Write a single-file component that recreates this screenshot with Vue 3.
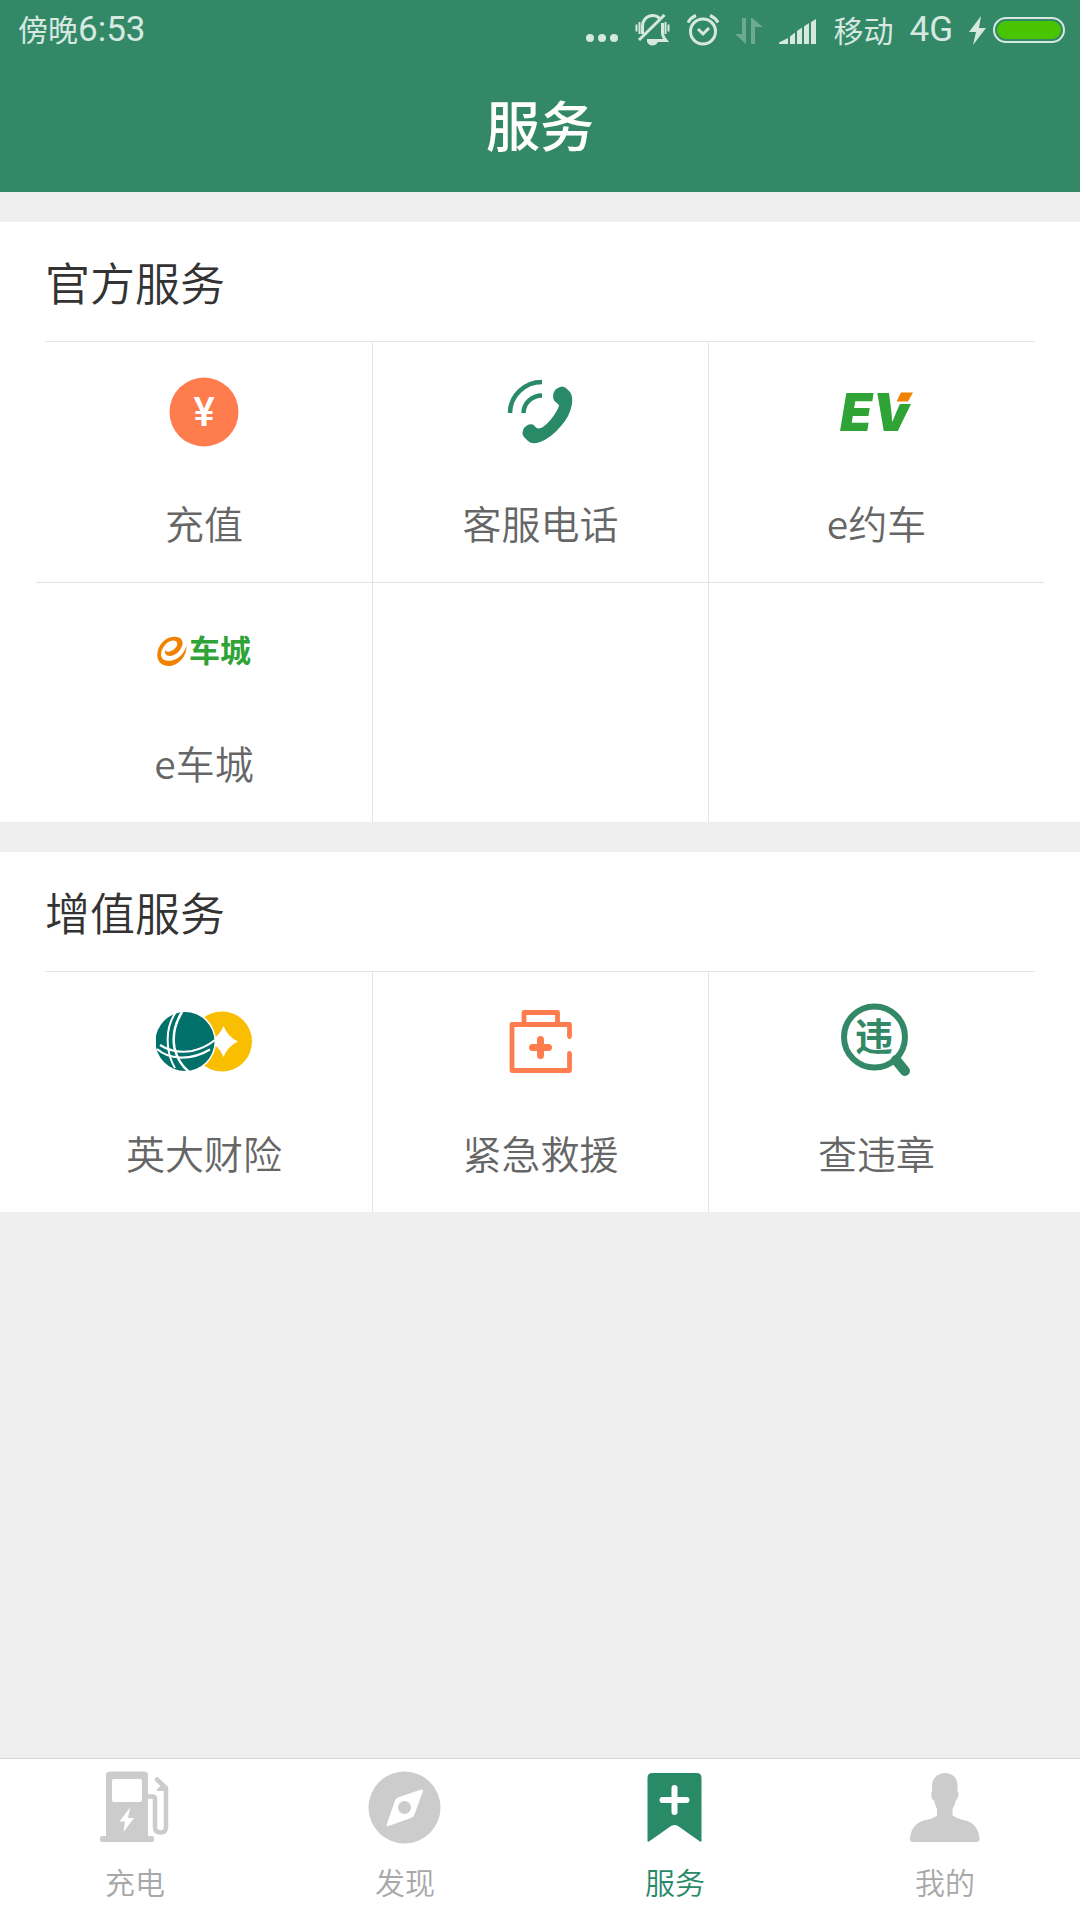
<template>
  <div class="service-page">
    <header class="page-head">
      <div class="status-bar">
        <div class="status-time">傍晚<span class="status-latin">6:53</span></div>
        <div class="status-icons">
          <svg width="34" height="32" viewBox="0 0 34 32" aria-hidden="true">
            <circle cx="5" cy="24" r="4" />
            <circle cx="17" cy="24" r="4" />
            <circle cx="29" cy="24" r="4" />
          </svg>
          <svg width="36" height="32" viewBox="0 0 36 32" aria-hidden="true">
            <g class="line">
              <path d="M7.5 20V12.5C7.5 6 12 1.5 17.5 1.5C20.5 1.5 23 2.5 24.5 4.5" />
              <path d="M27.5 9V19C27.5 22 29 24 31 26.5H12" />
              <path d="M29.5 1L4 26" />
              <path d="M1.5 10.500V17.500M4.500 8V20M30.500 8V20M33.500 10.500V17.500" stroke-width="2" />
            </g>
            <path d="M12 28H23Q21 31.500 17.500 31.500T12 28Z" />
          </svg>
          <svg width="32" height="32" viewBox="0 0 32 32" aria-hidden="true">
            <g class="line">
              <circle cx="16" cy="17.500" r="12.500" />
              <path d="M11 15L16 20L22 14" />
              <path d="M1 8.500Q4 3.500 9 1.500M31 8.500Q28 3.500 23 1.500" />
            </g>
          </svg>
          <svg class="dim" width="28" height="32" viewBox="0 0 28 32" aria-hidden="true">
            <path d="M7 4H11V30L0 20H7Z" />
            <path d="M16 30H20V13H28L17 4H16Z" />
          </svg>
          <svg width="38" height="32" viewBox="0 0 38 32" aria-hidden="true">
            <path d="M0 30V28.500L9 24V30ZM11 30V22.500L16 18.500V30ZM18 30V17L23 13.500V30ZM25 30V12.500L30 9V30ZM32 30V8L37 5V30Z" />
          </svg>
          <span class="status-carrier">移动</span>
          <span class="status-latin">4G</span>
          <span class="status-power">
            <svg width="18" height="32" viewBox="0 0 18 32" aria-hidden="true">
              <path d="M12 2L0 18H7L4 31L17 14H10Z" />
            </svg>
            <span class="battery"></span>
          </span>
        </div>
      </div>
      <h1>服务</h1>
    </header>

    <main>
      <section v-for="group in groups" :key="group.title" class="service-group">
        <h2>{{ group.title }}</h2>
        <div class="service-grid">
          <template v-for="(item, index) in group.items" :key="index">
            <button v-if="item" type="button" class="service-cell">
              <svg width="96" height="96" viewBox="0 0 96 96" aria-hidden="true">
                <g v-if="item.icon === 'recharge'">
                  <circle cx="48" cy="48" r="34.500" fill="#ff7c4e" />
                  <text class="yen" x="48" y="62" text-anchor="middle">¥</text>
                </g>
                <g v-else-if="item.icon === 'phone'">
                  <path d="M17 49A32 31 0 0 1 49 18M30.500 49A18.500 17.500 0 0 1 49 31.500" fill="none" stroke="#288a67" stroke-width="4.500" />
                  <path d="M65 24Q69 21 73 24L77 28Q80 32 79 40Q77 52 68 62Q58 74 47 78Q39 81 35 77L31 73Q28 69 31 64Q35 59 40 60.500L43 63.500Q46 65.500 50 63Q58 57 63 48Q66 43 66 41L61 36.500Q59 32 61 28Q62 25 65 24Z" fill="#288a67" />
                </g>
                <g v-else-if="item.icon === 'ev'">
                  <text class="ev" x="11" y="67">EV</text>
                  <path d="M70 26H92V40H63Z" fill="#fff" />
                  <path d="M72 28.500H84L79 37.500H67.500Z" fill="#f08200" />
                </g>
                <g v-else-if="item.icon === 'mall'">
                  <path d="M30.500 42C31 52 22 62.500 12 62C4 61.500 1 56 1.300 50C2 41 9 33 18 32.700C24 32.500 27.500 36 26.500 40.500C25 47 19 52 14 52C10.500 52 8 49 9 46C10.500 48.500 13 48 16 46.500C20 44.500 22 41 21 38.500C19.500 35.500 14.500 36 11 39C6.500 43 4 49 5.500 53C7 57 13 58 19 55.500C25 53 29 47 30.500 42Z" fill="#f08200" />
                  <text class="mall" x="33" y="58">车城</text>
                </g>
                <g v-else-if="item.icon === 'insurance'">
                  <circle cx="66" cy="47.500" r="30" fill="#fabe00" />
                  <path d="M67.500 32Q72 43 82 47.500Q72 52 67.500 63Q63 52 53 47.500Q63 43 67.500 32Z" fill="#fff" />
                  <circle cx="29" cy="47.500" r="31" fill="#fff" />
                  <circle cx="29" cy="47.500" r="29.500" fill="#00706b" />
                  <g fill="none" stroke="#fff">
                    <path d="M20 18Q10 32 12 52Q13 64 19 74" stroke-width="2" />
                    <path d="M26 18Q15 36 18.500 54Q22 69 33 78" stroke-width="2.500" />
                    <path d="M1 55Q10 63 24 63.500Q40 64 54 55.500" stroke-width="2.200" />
                    <path d="M4 51Q18 60 36 57Q49 54 59 46" stroke-width="2.200" />
                  </g>
                </g>
                <g v-else-if="item.icon === 'rescue'">
                  <g fill="none" stroke="#ff7c4e" stroke-width="4.800" stroke-linecap="round" stroke-linejoin="round">
                    <path d="M76.500 42.500V30.500H19V76.500H76.500V59.500" />
                    <path d="M31 29V18.500H64.500V29" />
                  </g>
                  <path d="M47.500 45.500V61.500M39.500 53.500H55.500" stroke="#ff7c4e" stroke-width="7" stroke-linecap="round" />
                </g>
                <g v-else>
                  <circle cx="45.500" cy="43" r="30.500" fill="none" stroke="#338967" stroke-width="6" />
                  <path d="M67 66L76 77" stroke="#338967" stroke-width="10" stroke-linecap="round" />
                  <text class="violation" x="45" y="56" text-anchor="middle">违</text>
                </g>
              </svg>
              <span>{{ item.label }}</span>
            </button>
            <div v-else class="service-cell"></div>
          </template>
        </div>
      </section>
    </main>

    <nav class="tab-bar">
      <a v-for="tab in tabs" :key="tab.icon" href="#" :class="{ active: tab.icon === 'service' }">
        <svg width="80" height="80" viewBox="0 0 80 80" aria-hidden="true">
          <g v-if="tab.icon === 'charge'">
            <path d="M11 69V8Q11 4.500 15 4.500H49Q53 4.500 53 8V69H57Q59 69 59 71V73Q59 75 57 75H7Q5 75 5 73V71Q5 69 7 69Z" />
            <rect x="17" y="12" width="30" height="23" rx="2" fill="#fff" />
            <path d="M35 40.500L24.500 54.500H30L28.500 65L39 51H33Z" fill="#fff" />
            <path d="M53 29.500H57.500Q60 29.500 60 32V60Q60 65.500 65.500 65.500T71 60V21L62 12.500" fill="none" stroke="currentColor" stroke-width="4.500" stroke-linecap="round" />
            <path d="M64 15L72 20V24H61.500Q62 21 66 19Z" />
          </g>
          <g v-else-if="tab.icon === 'discover'">
            <circle cx="39.500" cy="40.500" r="36" />
            <path d="M56 22.500L33 30.500Q31 31 30 33.500L21.500 58Q21.500 60 23.500 59L46 51Q48.500 50 49.500 47.500L58 24Q58 22 56 22.500Z" fill="#fff" />
            <circle cx="39.500" cy="40.500" r="6.500" />
          </g>
          <g v-else-if="tab.icon === 'service'">
            <path d="M12.500 74V11Q12.500 6 17.500 6H61.500Q66.500 6 66.500 11V74Q66.500 75 65 74.500L43 59Q39.500 57 36 59L14 74.500Q12.500 75 12.500 74Z" />
            <path d="M39.500 21V45M27.500 33H51.500" stroke="#fff" stroke-width="6" stroke-linecap="round" />
          </g>
          <path v-else d="M40 6C48 6 53 12 52.500 19V24Q54 25 53 30Q52.500 33 51 33Q50 38 47.500 42V48.500Q52 51.500 58 53C70 55 74 63 74.500 72Q74.500 75 71.500 75H8Q5 75 5 72C5.500 63 10 55 21 53Q28 51.500 32 48.500V42Q30 38 29 33Q27 33 26.500 30Q26 25 27 24V19C27 12 32 6 40 6Z" />
        </svg>
        <span>{{ tab.label }}</span>
      </a>
    </nav>
  </div>
</template>

<script setup>
// null 为占位空格，用来补齐一行
const groups = [
  {
    title: "官方服务",
    items: [
      { icon: "recharge", label: "充值" },
      { icon: "phone", label: "客服电话" },
      { icon: "ev", label: "e约车" },
      { icon: "mall", label: "e车城" },
      null,
      null,
    ],
  },
  {
    title: "增值服务",
    items: [
      { icon: "insurance", label: "英大财险" },
      { icon: "rescue", label: "紧急救援" },
      { icon: "violation", label: "查违章" },
    ],
  },
];

const tabs = [
  { icon: "charge", label: "充电" },
  { icon: "discover", label: "发现" },
  { icon: "service", label: "服务" },
  { icon: "mine", label: "我的" },
];
</script>

<style>
body {
  margin: 0;
  background: #efefef;
}
</style>

<style scoped>
.service-page {
  display: flex;
  flex-direction: column;
  min-height: 100vh;
  font-family: "Noto Sans CJK SC", sans-serif;
  font-weight: 350;
}

.page-head {
  padding-bottom: 4px;
  background: #338967;
}

.status-bar {
  display: flex;
  align-items: center;
  justify-content: space-between;
  height: 60px;
  padding: 0 15px 0 18px;
  color: #d6e8e0;
  font-size: 30px;
  font-weight: 400;
  line-height: 44px;
}

.status-latin {
  font-family: Roboto, sans-serif;
  font-size: 35px;
}

.status-icons {
  display: flex;
  align-items: center;
  gap: 16px;
}

.status-icons svg {
  fill: currentColor;
}

.status-icons .line {
  fill: none;
  stroke: currentColor;
  stroke-width: 3;
}

.status-icons .dim {
  opacity: 0.35;
}

.status-time,
.status-carrier {
  padding-bottom: 3px;
}

.status-power {
  display: flex;
  align-items: center;
  gap: 6px;
}

.battery {
  box-sizing: border-box;
  width: 72px;
  height: 26px;
  padding: 2px;
  border: 2px solid #d6e8e0;
  border-radius: 13px;
  background: #48c400 content-box;
}

.page-head h1 {
  margin: 0;
  color: #ffffff;
  font-size: 54px;
  font-weight: 500;
  line-height: 128px;
  text-align: center;
}

.service-group {
  margin-top: 30px;
  padding: 0 36px;
  background: #ffffff;
}

.service-group h2 {
  margin: 0 9px;
  border-bottom: 1px solid #e4e4e4;
  color: #333333;
  font-size: 45px;
  font-weight: 350;
  line-height: 119px;
}

.service-grid {
  display: grid;
  grid-template-columns: repeat(3, 1fr);
}

.service-cell {
  display: flex;
  flex-direction: column;
  align-items: center;
  gap: 34px;
  box-sizing: border-box;
  min-height: 240px;
  padding: 22px 0 28px;
  border: 0 solid #e4e4e4;
  border-left-width: 1px;
  background: none;
  color: #666666;
  font: inherit;
  font-size: 39px;
  line-height: 56px;
}

.service-cell:nth-child(3n + 1) {
  border-left-width: 0;
}

.service-cell:nth-child(n + 4) {
  padding-top: 21px;
  border-top-width: 1px;
}

.yen {
  fill: #ffffff;
  font-family: Roboto, sans-serif;
  font-size: 40px;
  font-weight: 500;
}

.ev {
  fill: #2fa336;
  font-family: Inter, sans-serif;
  font-size: 52px;
  font-style: italic;
  font-weight: 900;
}

.mall {
  fill: #2fa336;
  font-size: 31px;
  font-weight: 700;
}

.violation {
  fill: #338967;
  font-size: 38px;
  font-weight: 700;
}

.tab-bar {
  display: flex;
  margin-top: auto;
  border-top: 1px solid #d3d3d3;
  background: #ffffff;
}

.tab-bar a {
  display: flex;
  flex: 1;
  flex-direction: column;
  align-items: center;
  gap: 12px;
  padding: 8px 0 17px;
  color: #a8a8a8;
  font-size: 30px;
  line-height: 44px;
  text-decoration: none;
}

.tab-bar svg {
  color: #cccccc;
  fill: currentColor;
}

.tab-bar .active,
.tab-bar .active svg {
  color: #288a67;
}
</style>
